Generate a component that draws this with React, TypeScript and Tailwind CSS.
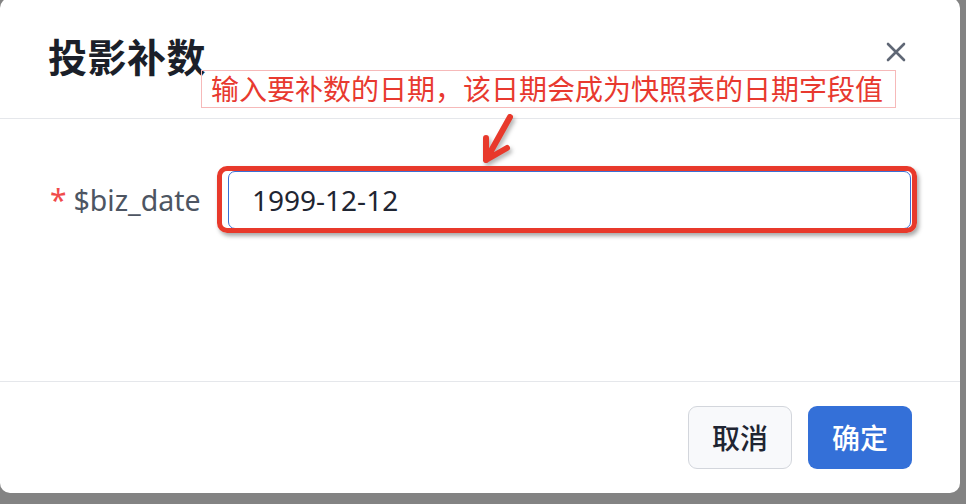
import React from "react";

export default function App() {
  return (
    <div
      className="w-[966px] h-[504px] bg-[#838383] flex items-start overflow-hidden"
      style={{ fontFamily: '"Noto Sans", "Noto Sans CJK SC", sans-serif' }}
    >
      <div className="relative w-[960px] h-[495px] -mt-[2px] bg-white rounded-[10px] flex flex-col">
        <header className="h-[121px] shrink-0 border-b border-[#e5e7eb] pl-[48px] pr-[54px] pt-[39px] flex justify-between items-start">
          <h1 className="text-[39px] leading-[40px] font-bold text-[#1b1f29] tracking-[0.5px]">投影补数</h1>
          <svg width="20" height="20" viewBox="0 0 20 20" className="mt-[5px]">
            <path d="M2 2 L18 18 M18 2 L2 18" stroke="#5f6775" strokeWidth="2.6" strokeLinecap="round" />
          </svg>
        </header>

        <div className="absolute left-[201px] top-[72px] w-[695px] h-[38px] border border-[#f6b9b9] flex items-center pl-[9px] text-[28px] leading-none text-[#e8392f]">
          输入要补数的日期，该日期会成为快照表的日期字段值
        </div>

        <svg className="absolute left-[470px] top-[108px]" width="60" height="70" viewBox="0 0 60 70">
          <g style={{ filter: "drop-shadow(2px 3px 2px rgba(0,0,0,0.3))" }}>
            <path d="M40 11 L16 54 M16 54 L16 32 M16 54 L37 42" stroke="#e8392b" strokeWidth="6" strokeLinecap="round" strokeLinejoin="round" fill="none" />
          </g>
        </svg>

        <div className="flex-1 pl-[48px] pr-[49px] pt-[52px]">
          <div className="flex items-center h-[58px]">
            <label className="w-[180px] flex items-center text-[28px] leading-none">
              <span className="text-[#f04b4b] pl-[2px] text-[30px]">*</span>
              <span className="text-[#4d5562] ml-[7px] text-[28.5px]">$biz_date</span>
            </label>
            <div className="relative flex-1 h-[58px]">
              <input
                readOnly
                value="1999-12-12"
                className="w-full h-full border border-[#3a6fd6] rounded-[7px] pl-[23px] text-[28px] text-[#1f2532] outline-none bg-white"
                style={{ fontFamily: '"Noto Sans", sans-serif' }}
              />
              <div className="absolute left-[-11px] right-[-6px] top-[-5px] bottom-[-4px] border-[5px] border-[#e8392b] rounded-[10px] shadow-[2px_3px_4px_rgba(0,0,0,0.35)] pointer-events-none" />
            </div>
          </div>
        </div>

        <footer className="h-[112px] shrink-0 border-t border-[#e5e7eb] flex items-center justify-end pr-[48px] gap-[16px]">
          <button className="w-[104px] h-[63px] rounded-[9px] bg-[#f8f9fb] border-[1.5px] border-[#d3d6dc] text-[28px] font-medium text-[#1f2532]">
            取消
          </button>
          <button className="w-[104px] h-[63px] rounded-[9px] bg-[#3470d8] text-[28px] font-medium text-white">
            确定
          </button>
        </footer>
      </div>
    </div>
  );
}
